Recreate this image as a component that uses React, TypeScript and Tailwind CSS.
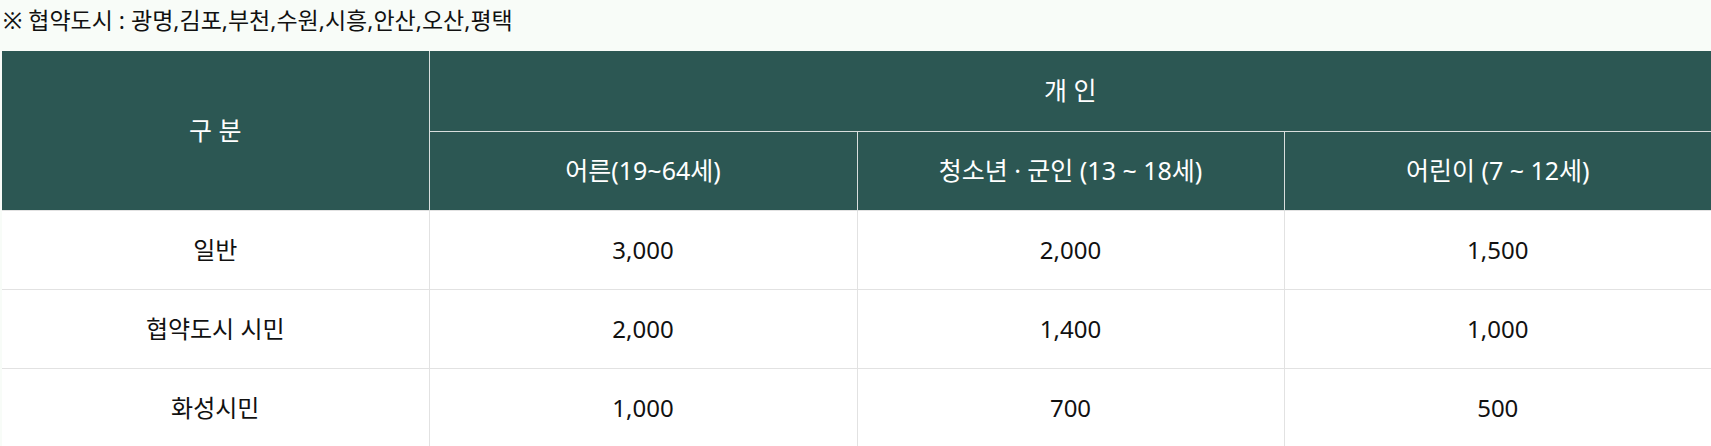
const rows = [
  { label: "일반", adult: "3,000", youth: "2,000", child: "1,500" },
  { label: "협약도시 시민", adult: "2,000", youth: "1,400", child: "1,000" },
  { label: "화성시민", adult: "1,000", youth: "700", child: "500" },
];

const font = { fontFamily: '"Noto Sans", "Noto Sans CJK KR", sans-serif' };

export default function App() {
  return (
    <div className="w-[1711px] h-[446px] bg-[#f8fcf8] text-[#111]" style={font}>
      <p className="h-[51px] pt-[3px] pl-[3px] text-[23px] leading-[34px] text-[#111]">
        ※ 협약도시 : 광명,김포,부천,수원,시흥,안산,오산,평택
      </p>
      <table className="ml-[2px] w-[1709px] table-fixed border-collapse text-[24px]">
        <colgroup>
          <col className="w-[427px]" />
          <col className="w-[428px]" />
          <col className="w-[427px]" />
          <col className="w-[427px]" />
        </colgroup>
        <thead className="bg-[#2c5753] text-white text-[25px]">
          <tr className="h-[80px]">
            <th rowSpan={2} className="font-normal border-r border-[#d8dedd]">
              구 분
            </th>
            <th colSpan={3} className="font-normal border-b border-[#d8dedd]">
              개 인
            </th>
          </tr>
          <tr className="h-[79px]">
            <th className="font-normal border-r border-[#d8dedd]">어른(19~64세)</th>
            <th className="font-normal border-r border-[#d8dedd]">청소년 · 군인 (13 ~ 18세)</th>
            <th className="font-normal">어린이 (7 ~ 12세)</th>
          </tr>
        </thead>
        <tbody className="bg-white">
          {rows.map((r) => (
            <tr key={r.label} className="h-[79px] border-t border-b border-[#e2e2e2]">
              <td className="text-center border-r border-[#e2e2e2]">{r.label}</td>
              <td className="text-center border-r border-[#e2e2e2]">{r.adult}</td>
              <td className="text-center border-r border-[#e2e2e2]">{r.youth}</td>
              <td className="text-center">{r.child}</td>
            </tr>
          ))}
        </tbody>
      </table>
    </div>
  );
}
